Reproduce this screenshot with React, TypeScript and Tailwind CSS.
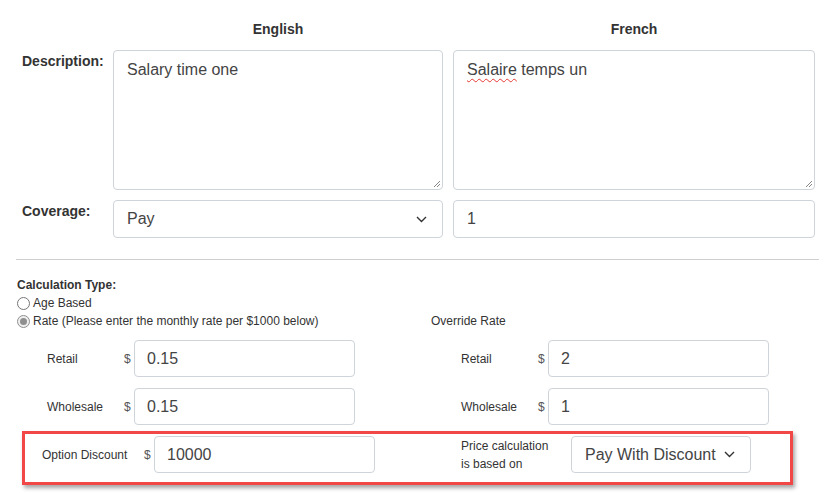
import React from "react";

const font = { fontFamily: '"Liberation Sans", Arial, sans-serif' };

const Chevron: React.FC = () => (
  <svg width="11" height="7" viewBox="0 0 11 7" fill="none">
    <path d="M1 1l4.5 4.5L10 1" stroke="#333" strokeWidth="1.4" />
  </svg>
);

const Grip: React.FC = () => (
  <svg className="absolute right-[1px] bottom-[1px]" width="9" height="9" viewBox="0 0 9 9">
    <path d="M8 2L2 8M8 5L5 8" stroke="#888" strokeWidth="1" />
  </svg>
);

const Radio: React.FC<{ checked?: boolean }> = ({ checked }) =>
  checked ? (
    <span className="w-[13px] h-[13px] rounded-full border border-[#8f8f8f] bg-[#efefef] flex items-center justify-center">
      <span className="w-[7px] h-[7px] rounded-full bg-[#8f8f8f]" />
    </span>
  ) : (
    <span className="w-[13px] h-[13px] rounded-full border border-[#767676] bg-white" />
  );

const RateRow: React.FC<{ label: string; value: string }> = ({ label, value }) => (
  <div className="flex items-center pl-[30px]">
    <span className="w-[77px] text-[12px] text-[#333]">{label}</span>
    <span className="w-[10px] text-[12px] text-[#555]">$</span>
    <div className="w-[221px] h-[37px] border border-[#ced4da] rounded-[4px] flex items-center pl-[12px] text-[16px] text-[#444]">
      {value}
    </div>
  </div>
);

export default function App() {
  return (
    <div className="w-[840px] h-[494px] bg-white overflow-hidden" style={font}>
      {/* language grid */}
      <div className="pt-[21px] pl-[22px]">
        <div className="flex h-[16px] mb-[13px]">
          <div className="w-[91px]" />
          <div className="w-[330px] text-center text-[14px] font-bold text-[#333] leading-[16px]">English</div>
          <div className="w-[10px]" />
          <div className="w-[362px] text-center text-[14px] font-bold text-[#333] leading-[16px]">French</div>
        </div>
        <div className="flex">
          <div className="w-[91px] pt-[1px] text-[14px] font-bold text-[#333]">Description:</div>
          <div className="relative w-[330px] h-[140px] border border-[#ced4da] rounded-[4px] pl-[13px] pt-[7px] text-[16px] text-[#444]">
            Salary time one
            <Grip />
          </div>
          <div className="w-[10px]" />
          <div className="relative w-[362px] h-[140px] border border-[#ced4da] rounded-[4px] pl-[13px] pt-[7px] text-[16px] text-[#444]">
            <span className="underline decoration-wavy decoration-[#e53935] decoration-1 underline-offset-[3px]">Salaire</span> temps un
            <Grip />
          </div>
        </div>
        <div className="flex mt-[10px]">
          <div className="w-[91px] pt-[1px] text-[14px] font-bold text-[#333]">Coverage:</div>
          <div className="w-[330px] h-[38px] border border-[#ced4da] rounded-[4px] flex items-center justify-between pl-[13px] pr-[15px] text-[16px] text-[#444]">
            <span>Pay</span>
            <Chevron />
          </div>
          <div className="w-[10px]" />
          <div className="w-[362px] h-[38px] border border-[#ced4da] rounded-[4px] flex items-center pl-[13px] text-[16px] text-[#444]">
            1
          </div>
        </div>
      </div>

      <div className="ml-[16px] w-[803px] mt-[21px] border-t border-[#cfcfcf]" />

      {/* calculation section */}
      <div className="pl-[17px] pt-[16px]">
        <div className="text-[12px] font-bold text-[#333] leading-[18px]">Calculation Type:</div>
        <div className="flex items-center gap-[3px] text-[12px] text-[#333] leading-[18px]">
          <Radio />
          <span>Age Based</span>
        </div>
        <div className="flex leading-[19px] text-[12px] text-[#333]">
          <div className="w-[414px] flex items-center gap-[3px]">
            <Radio checked />
            <span>Rate (Please enter the monthly rate per $1000 below)</span>
          </div>
          <div>Override Rate</div>
        </div>

        <div className="flex mt-[9px]">
          <div className="w-[414px]"><RateRow label="Retail" value="0.15" /></div>
          <RateRow label="Retail" value="2" />
        </div>
        <div className="flex mt-[11px]">
          <div className="w-[414px]"><RateRow label="Wholesale" value="0.15" /></div>
          <RateRow label="Wholesale" value="1" />
        </div>

        {/* highlighted row */}
        <div className="ml-[5px] mt-[6px] w-[771px] h-[54px] border-[3px] border-[#f24747] shadow-[2px_3px_4px_rgba(0,0,0,0.35)] flex items-start pt-[2px]">
          <div className="w-[436px] flex items-center pl-[17px]">
            <span className="w-[102px] text-[12px] text-[#333]">Option Discount</span>
            <span className="w-[10px] text-[12px] text-[#555]">$</span>
            <div className="w-[221px] h-[37px] border border-[#ced4da] rounded-[4px] flex items-center pl-[12px] text-[16px] text-[#444]">
              10000
            </div>
          </div>
          <div className="flex items-center">
            <span className="w-[110px] text-[12px] text-[#333] leading-[18px]">
              Price calculation
              <br />
              is based on
            </span>
            <div className="w-[180px] h-[37px] border border-[#ced4da] rounded-[4px] flex items-center justify-between pl-[13px] pr-[15px] text-[16px] text-[#444]">
              <span>Pay With Discount</span>
              <Chevron />
            </div>
          </div>
        </div>
      </div>
    </div>
  );
}
